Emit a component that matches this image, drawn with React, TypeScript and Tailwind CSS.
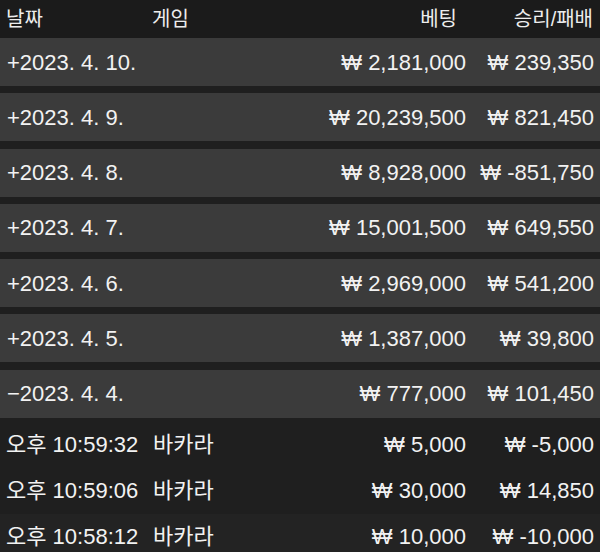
import React from 'react';

interface DayRow {
    date: string;
    bet: string;
    result: string;
}

interface BetRow {
    time: string;
    game: string;
    bet: string;
    result: string;
}

const days: DayRow[] = [
    { date: '+2023. 4. 10.', bet: '₩ 2,181,000', result: '₩ 239,350' },
    { date: '+2023. 4. 9.', bet: '₩ 20,239,500', result: '₩ 821,450' },
    { date: '+2023. 4. 8.', bet: '₩ 8,928,000', result: '₩ -851,750' },
    { date: '+2023. 4. 7.', bet: '₩ 15,001,500', result: '₩ 649,550' },
    { date: '+2023. 4. 6.', bet: '₩ 2,969,000', result: '₩ 541,200' },
    { date: '+2023. 4. 5.', bet: '₩ 1,387,000', result: '₩ 39,800' },
    { date: '−2023. 4. 4.', bet: '₩ 777,000', result: '₩ 101,450' },
];

const bets: BetRow[] = [
    { time: '오후 10:59:32', game: '바카라', bet: '₩ 5,000', result: '₩ -5,000' },
    { time: '오후 10:59:06', game: '바카라', bet: '₩ 30,000', result: '₩ 14,850' },
    { time: '오후 10:58:12', game: '바카라', bet: '₩ 10,000', result: '₩ -10,000' },
];

const font = "font-['Liberation_Sans','Noto_Sans_CJK_KR',sans-serif]";

const App: React.FC = () => {
    return (
        <div className={`w-[600px] h-[552px] overflow-hidden bg-[#1f1f1f] text-[#f2f2f2] ${font}`}>
            {/* Header */}
            <div className="h-[38px] bg-[#1b1b1b] flex items-center pl-[6px] pr-[7px] text-[20px] text-[#ededed]">
                <div className="w-[146px]">날짜</div>
                <div className="flex-1">게임</div>
                <div className="pr-[8px]">베팅</div>
                <div className="w-[128px] text-right">승리/패배</div>
            </div>

            {/* Daily summary */}
            <div className="flex flex-col gap-[7.3px]">
                {days.map((d) => (
                    <div key={d.date} className="h-[48px] bg-[#3b3b3b] flex items-center pl-[7px] pr-[6px] text-[22px]">
                        <div className="flex-1">{d.date}</div>
                        <div className="text-right">{d.bet}</div>
                        <div className="w-[128px] text-right">{d.result}</div>
                    </div>
                ))}
            </div>

            {/* Bet list */}
            <div className="pt-[4px]">
                {bets.map((b, i) => (
                    <div
                        key={b.time}
                        className={`h-[46px] flex items-center pl-[6px] pr-[6px] text-[22px] ${i === bets.length - 1 ? 'bg-[#232323]' : ''}`}
                    >
                        <div className="w-[147px]">{b.time}</div>
                        <div className="flex-1">{b.game}</div>
                        <div className="text-right">{b.bet}</div>
                        <div className="w-[128px] text-right">{b.result}</div>
                    </div>
                ))}
            </div>
        </div>
    );
};

export default App;
